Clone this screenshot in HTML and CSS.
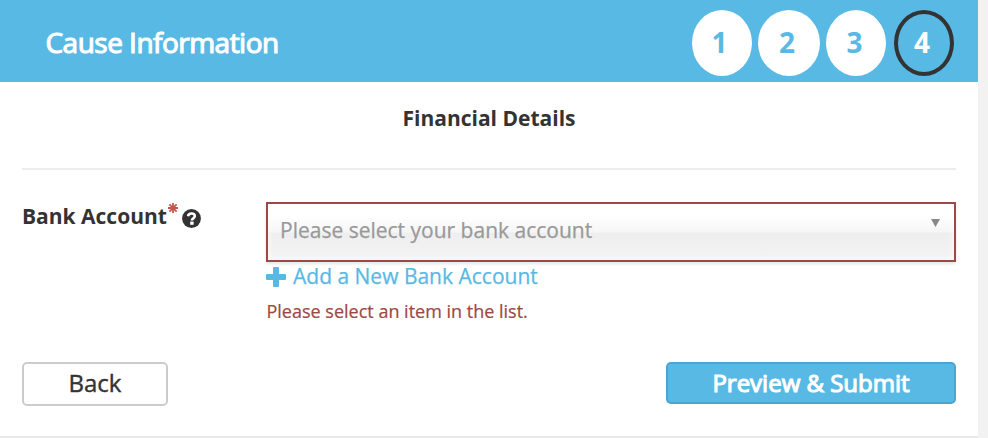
FILE: index.html
```html
<!DOCTYPE html>
<html lang="en">
<head>
<meta charset="utf-8">
<title>Cause Information</title>
<link rel="stylesheet" href="styles.css">
</head>
<body>
<main class="panel">
  <header class="header">
    <h1 class="title"><span>Cause Information</span></h1>
    <ol class="steps">
      <li class="step">1</li>
      <li class="step step-wide">2</li>
      <li class="step step-third">3</li>
      <li class="step step-current">4</li>
    </ol>
  </header>
  <form class="content">
    <h2 class="subtitle"><span>Financial Details</span></h2>
    <div class="row">
      <div class="label">
        <span class="label-text">Bank Account</span>
        <svg class="required" viewBox="0 0 10 10"><path d="M5 0v10M0 5h10M1.4 1.4l7.2 7.2M8.6 1.4L1.4 8.6"/></svg>
        <svg class="help" viewBox="0 0 19 19"><circle cx="9.5" cy="9.5" r="9.4"/><path d="M6 7.2C6.4 5.2 7.6 4.5 9.5 4.5c2.1 0 3.3 1 3.3 2.6 0 2.3-2.9 2.2-2.9 4.3"/><rect x="8.2" y="12.6" width="3.4" height="3.2"/></svg>
      </div>
      <div class="field">
        <div class="select"><span class="placeholder">Please select your bank account</span><svg class="arrow" viewBox="0 0 9 8"><path d="M0 0h9L4.5 8z"/></svg></div>
        <a class="add"><svg class="plus" viewBox="0 0 20 20"><path d="M7 1q0-1 1-1h4q1 0 1 1v6h6q1 0 1 1v4q0 1-1 1h-6v6q0 1-1 1H8q-1 0-1-1v-6H1q-1 0-1-1V8q0-1 1-1h6z"/></svg><span class="add-text">Add a New Bank Account</span></a>
        <div class="error"><span>Please select an item in the list.</span></div>
      </div>
    </div>
    <div class="actions">
      <button type="button" class="button back"><span>Back</span></button>
      <button type="button" class="button submit"><span>Preview &amp; Submit</span></button>
    </div>
  </form>
</main>
</body>
</html>
```
FILE: styles.css
```css
* { box-sizing: border-box; }
body {
  margin: 0;
  height: 438px;
  overflow: hidden;
  background: #f2f2f2;
  color: #333;
  font-family: "Open Sans", sans-serif;
}
.panel {
  width: 978px;
  height: 438px;
  background: #fff;
  border-bottom: 2px solid #e9e9e9;
}
.header {
  display: flex;
  justify-content: space-between;
  height: 82px;
  padding: 10px 24px 0 45.5px;
  background: #58b9e4;
  color: #fff;
}
.title {
  margin: 13px 0 0;
  font-size: 28px;
  line-height: 38px;
  font-weight: 400;
  letter-spacing: -0.52px;
  -webkit-text-stroke: 1.1px #fff;
}
.steps {
  display: flex;
  gap: 6px;
  margin: 0;
  padding: 0;
  list-style: none;
}
.step {
  width: 60px;
  height: 66px;
  padding-right: 5px;
  border-radius: 50%;
  background: #fff;
  color: #58b9e4;
  font-size: 28px;
  font-weight: 700;
  line-height: 64px;
  text-align: center;
}
.step-wide { width: 62px; padding-right: 4px; }
.step-third { padding-right: 3px; }
.step-current {
  margin-left: 2px;
  padding-right: 4px;
  border: 4px solid #333;
  background: none;
  color: #fff;
  line-height: 56px;
}
.content { padding: 0 22px; }
.subtitle {
  height: 88px;
  margin: 0;
  padding-top: 21px;
  border-bottom: 2px solid #ececec;
  font-size: 21px;
  line-height: 30px;
  font-weight: 700;
  text-align: center;
}
.row {
  display: flex;
  height: 160px;
  margin-top: 32px;
}
.label {
  display: flex;
  align-items: flex-start;
  width: 244px;
  font-size: 21px;
  line-height: 28px;
  font-weight: 700;
}
.required {
  width: 10px;
  height: 10px;
  margin: 1px 0 0 1px;
  fill: none;
  stroke: #c9544f;
  stroke-width: 1.8;
}
.help {
  width: 19px;
  height: 19px;
  margin: 7px 0 0 4px;
  fill: #333;
}
.help path { fill: none; stroke: #fff; stroke-width: 2.6; }
.help rect { fill: #fff; }
.field { width: 690px; }
.select {
  display: flex;
  justify-content: space-between;
  height: 60px;
  padding: 0 14px 0 12px;
  border: 2px solid #9c4845;
  background: linear-gradient(#fff 20%, #f6f6f6 50%, #eee 52%, #f4f4f4 100%);
  box-shadow: inset 0 0 6px #fff, 0 2px 3px rgba(0, 0, 0, 0.1);
  color: #999;
  font-size: 21px;
  line-height: 52px;
  -webkit-text-stroke: 0.25px #999;
}
.arrow {
  width: 9px;
  height: 8px;
  margin-top: 15px;
  fill: #888;
}
.add {
  display: flex;
  height: 30px;
  color: #58b9e4;
  font-size: 21px;
  line-height: 28px;
  -webkit-text-stroke: 0.25px #58b9e4;
}
.plus {
  width: 20px;
  height: 20px;
  margin: 5px 7px 0 0;
  fill: #58b9e4;
}
.error {
  margin-top: 6px;
  padding-left: 0.5px;
  color: #9c4845;
  font-size: 18px;
  line-height: 26px;
  -webkit-text-stroke: 0.2px #9c4845;
}
.actions {
  display: flex;
  justify-content: space-between;
  align-items: flex-start;
}
.button {
  padding: 0;
  border: 2px solid #ccc;
  border-radius: 5px;
  background: #fff;
  color: #333;
  font: 400 24px/38px "Open Sans", sans-serif;
}
.back { width: 146px; height: 44px; padding-bottom: 2px; -webkit-text-stroke: 0.4px #333; }
.submit {
  width: 290px;
  height: 42px;
  border-color: #4aa5cf;
  background: #58b9e4;
  color: #fff;
  -webkit-text-stroke: 1.1px #fff;
}
```
